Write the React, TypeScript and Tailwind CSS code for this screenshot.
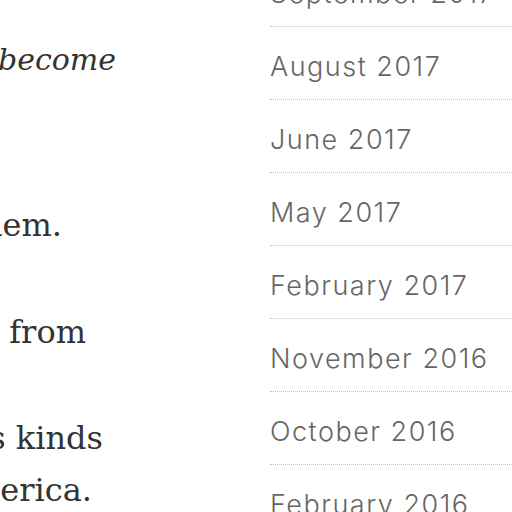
import React from "react";

const lines = [
  { text: "we have slowly become", end: "w-[116px]", italic: true, gap: "mt-[34px]" },
  { text: "who we are, and all of them.", end: "w-[62px]", italic: false, gap: "mt-[113px]" },
  { text: "the stories we tell come from", end: "w-[86px]", italic: false, gap: "mt-[55px]" },
  { text: "people of various kinds", end: "w-[103px]", italic: false, gap: "mt-[54px]" },
  { text: "all across America.", end: "w-[92px]", italic: false, gap: "mt-0" },
];

const archives = [
  "September 2017",
  "August 2017",
  "June 2017",
  "May 2017",
  "February 2017",
  "November 2016",
  "October 2016",
  "February 2016",
];

export default function App() {
  return (
    <div className="w-[512px] h-[512px] overflow-hidden bg-white flex">
      {/* 본문 - 왼쪽이 잘린 상태 */}
      <div className="w-[270px] shrink-0 overflow-hidden font-['DejaVu_Serif',serif] text-[32px] leading-[52px] text-[#333]">
        {lines.map((l, i) => (
          <div key={i} className={`${l.end} ${l.gap} flex justify-end`}>
            <span className={`whitespace-nowrap ${l.italic ? "italic text-[30px]" : ""}`}>
              {l.text}
            </span>
          </div>
        ))}
      </div>

      {/* 아카이브 목록 */}
      <ul className="flex-1 -mt-[46px] font-['Inter',sans-serif] font-light text-[27px] tracking-[1.5px] text-[#666]">
        {archives.map((a) => (
          <li
            key={a}
            className="h-[73px] flex items-center pt-[9px] border-b border-dotted border-[#c4c4c4] whitespace-nowrap"
          >
            {a}
          </li>
        ))}
      </ul>
    </div>
  );
}
